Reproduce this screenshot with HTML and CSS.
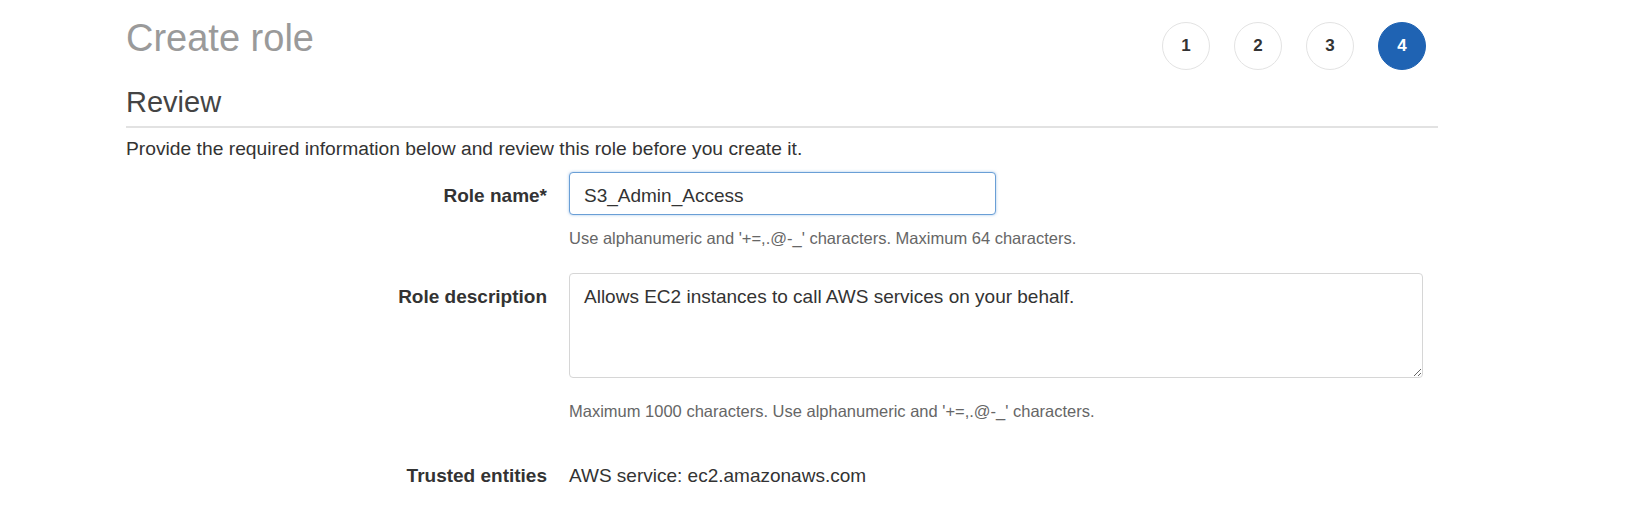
FILE: index.html
```html
<!DOCTYPE html>
<html lang="en">
<head>
<meta charset="utf-8">
<title>Create role</title>
<link rel="stylesheet" href="styles.css">
</head>
<body>
<div class="page">
  <header class="top">
    <h1 class="title">Create role</h1>
    <ol class="steps">
      <li class="step">1</li>
      <li class="step">2</li>
      <li class="step">3</li>
      <li class="step step-active">4</li>
    </ol>
  </header>
  <h2 class="section">Review</h2>
  <p class="intro">Provide the required information below and review this role before you create it.</p>
  <div class="form">
    <label class="label" for="rolename">Role name*</label>
    <div class="control">
      <input id="rolename" class="input" type="text" value="S3_Admin_Access">
      <div class="hint hint-1">Use alphanumeric and '+=,.@-_' characters. Maximum 64 characters.</div>
    </div>
    <label class="label" for="roledesc">Role description</label>
    <div class="control">
      <textarea id="roledesc" class="textarea">Allows EC2 instances to call AWS services on your behalf.</textarea>
      <div class="hint hint-2">Maximum 1000 characters. Use alphanumeric and '+=,.@-_' characters.</div>
    </div>
    <div class="label label-static">Trusted entities</div>
    <div class="control value">AWS service: ec2.amazonaws.com</div>
  </div>
</div>
</body>
</html>
```
FILE: styles.css
```css
html, body {
  margin: 0;
  padding: 0;
  background: #ffffff;
}
body {
  font-family: "Liberation Sans", Arial, Helvetica, sans-serif;
  color: #333333;
}
.page {
  width: 1312px;
  padding: 16px 0 0 126px;
}
.top {
  display: flex;
  justify-content: space-between;
  align-items: flex-start;
}
.title {
  margin: 0;
  font-size: 38px;
  line-height: 44px;
  font-weight: 400;
  color: #9a9a9a;
}
.steps {
  list-style: none;
  display: flex;
  gap: 24px;
  margin: 6px 12px 0 0;
  padding: 0;
}
.step {
  width: 46px;
  height: 46px;
  border: 1px solid #e3e3e3;
  border-radius: 50%;
  display: flex;
  align-items: center;
  justify-content: center;
  font-size: 17px;
  font-weight: 700;
  color: #333333;
}
.step-active {
  background: #1f63b3;
  border-color: #1f63b3;
  color: #ffffff;
}
.section {
  margin: 16px 0 0;
  padding-bottom: 8px;
  font-size: 29px;
  line-height: 32px;
  font-weight: 400;
  color: #444444;
  border-bottom: 2px solid #e2e2e2;
}
.intro {
  margin: 11px 0 0;
  font-size: 19.25px;
  line-height: 20px;
  color: #333333;
}
.form {
  display: grid;
  grid-template-columns: 421px 1fr;
  column-gap: 22px;
  margin-top: 13px;
}
.label {
  text-align: right;
  font-size: 19px;
  line-height: 22px;
  font-weight: 700;
  color: #333333;
  padding-top: 13px;
}
.control {
  display: flex;
  flex-direction: column;
  align-items: flex-start;
}
.input {
  box-sizing: border-box;
  width: 427px;
  height: 43px;
  margin: 0;
  padding: 4px 14px 0;
  border: 1px solid #6a9fd6;
  border-radius: 4px;
  box-shadow: 0 0 3px rgba(90, 150, 215, 0.55);
  font-family: "Liberation Sans", Arial, Helvetica, sans-serif;
  font-size: 19px;
  color: #333333;
  outline: none;
  background: #ffffff;
}
.textarea {
  box-sizing: border-box;
  width: 854px;
  height: 105px;
  margin: 0;
  padding: 12px 14px;
  border: 1px solid #d6d6d6;
  border-radius: 4px;
  font-family: "Liberation Sans", Arial, Helvetica, sans-serif;
  font-size: 19px;
  line-height: 22px;
  color: #333333;
  resize: vertical;
  outline: none;
  background: #ffffff;
}
.hint {
  font-size: 16.5px;
  line-height: 18px;
  color: #666666;
}
.hint-1 {
  margin: 14px 0 26px;
}
.hint-2 {
  margin: 24px 0 0;
}
.label-static {
  margin-top: 32px;
}
.value {
  margin-top: 32px;
  padding-top: 13px;
  font-size: 19px;
  line-height: 22px;
  color: #333333;
}
```
